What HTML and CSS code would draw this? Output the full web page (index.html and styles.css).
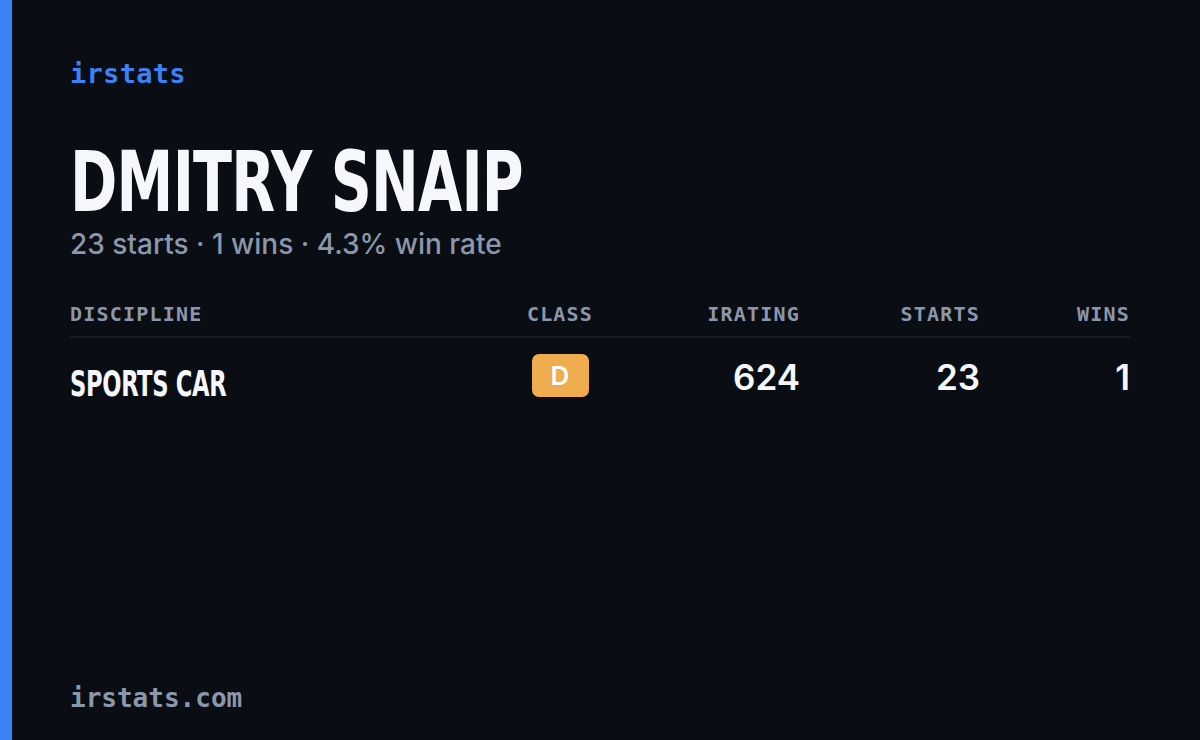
FILE: index.html
```html
<!DOCTYPE html>
<html lang="en">
<head>
<meta charset="utf-8">
<title>irstats – Dmitry Snaip</title>
<link rel="stylesheet" href="styles.css">
</head>
<body>
<div class="card">
  <div class="accent"></div>
  <main class="content">
    <div class="logo">irstats</div>
    <h1 class="name"><span class="squeeze name-text">DMITRY SNAIP</span></h1>
    <p class="summary">23 starts · 1 wins · 4.3% win rate</p>
    <div class="table">
      <div class="row head">
        <div class="cell left">DISCIPLINE</div>
        <div class="cell center">CLASS</div>
        <div class="cell right">IRATING</div>
        <div class="cell right">STARTS</div>
        <div class="cell right">WINS</div>
      </div>
      <div class="row body">
        <div class="cell left discipline"><span class="squeeze disc-text">SPORTS CAR</span></div>
        <div class="cell center"><span class="badge">D</span></div>
        <div class="cell right num">624</div>
        <div class="cell right num">23</div>
        <div class="cell right num">1</div>
      </div>
    </div>
    <div class="spacer"></div>
    <div class="footer">irstats.com</div>
  </main>
</div>
</body>
</html>
```

FILE: styles.css
```css
* { box-sizing: border-box; }
html, body {
  margin: 0;
  padding: 0;
  width: 1200px;
  height: 740px;
  background: #0a0d14;
  overflow: hidden;
}
.card {
  display: flex;
  width: 1200px;
  height: 740px;
}
.accent {
  width: 12px;
  flex: none;
  background: #3b82f6;
}
.content {
  flex: 1;
  display: flex;
  flex-direction: column;
  padding: 56px 70px 24px 58px;
}
.logo {
  font-family: "DejaVu Sans Mono", "Liberation Mono", monospace;
  font-weight: 700;
  font-size: 27px;
  letter-spacing: 0.3px;
  line-height: 36px;
  color: #3b82f6;
}
.name {
  margin: 52px 0 0;
  font-family: "DejaVu Sans Condensed", "Liberation Sans", sans-serif;
  font-weight: 700;
  font-size: 84px;
  line-height: 76px;
  color: #f5f7fb;
  white-space: nowrap;
}
.squeeze {
  display: inline-block;
  transform-origin: left center;
}
.name-text {
  transform: scaleX(0.755);
  letter-spacing: -1px;
}
.summary {
  margin: 6px 0 0;
  font-family: "Inter", "Noto Sans", sans-serif;
  font-weight: 500;
  font-size: 28px;
  line-height: 36px;
  color: #8b97ab;
}
.table {
  margin-top: 34px;
  display: flex;
  flex-direction: column;
}
.row {
  display: grid;
  grid-template-columns: 1fr 120px 180px 180px 150px;
  align-items: center;
}
.row.head {
  height: 42px;
  padding-bottom: 4px;
  border-bottom: 2px solid #171b25;
  font-family: "DejaVu Sans Mono", "Liberation Mono", monospace;
  font-weight: 700;
  font-size: 20px;
  letter-spacing: 1.2px;
  color: #8b97ab;
}
.row.body {
  height: 74px;
}
.cell.left { text-align: left; }
.cell.center { text-align: center; }
.cell.right { text-align: right; }
.discipline {
  font-family: "DejaVu Sans Condensed", "Liberation Sans", sans-serif;
  font-weight: 700;
  font-size: 35px;
  color: #f5f7fb;
  padding-top: 18px;
  white-space: nowrap;
}
.disc-text {
  transform: scaleX(0.72);
  letter-spacing: -0.5px;
}
.num {
  font-family: "Inter", "Noto Sans", sans-serif;
  font-weight: 600;
  font-size: 35px;
  color: #f5f7fb;
  padding-top: 4px;
}
.badge {
  display: inline-flex;
  align-items: center;
  justify-content: center;
  width: 57px;
  height: 43px;
  border-radius: 7px;
  background: #efad4f;
  color: #ffffff;
  font-family: "Inter", "Noto Sans", sans-serif;
  font-weight: 600;
  font-size: 26px;
}
.spacer { flex: 1; }
.footer {
  font-family: "DejaVu Sans Mono", "Liberation Mono", monospace;
  font-weight: 700;
  font-size: 26px;
  line-height: 36px;
  color: #8b97ab;
}
```
